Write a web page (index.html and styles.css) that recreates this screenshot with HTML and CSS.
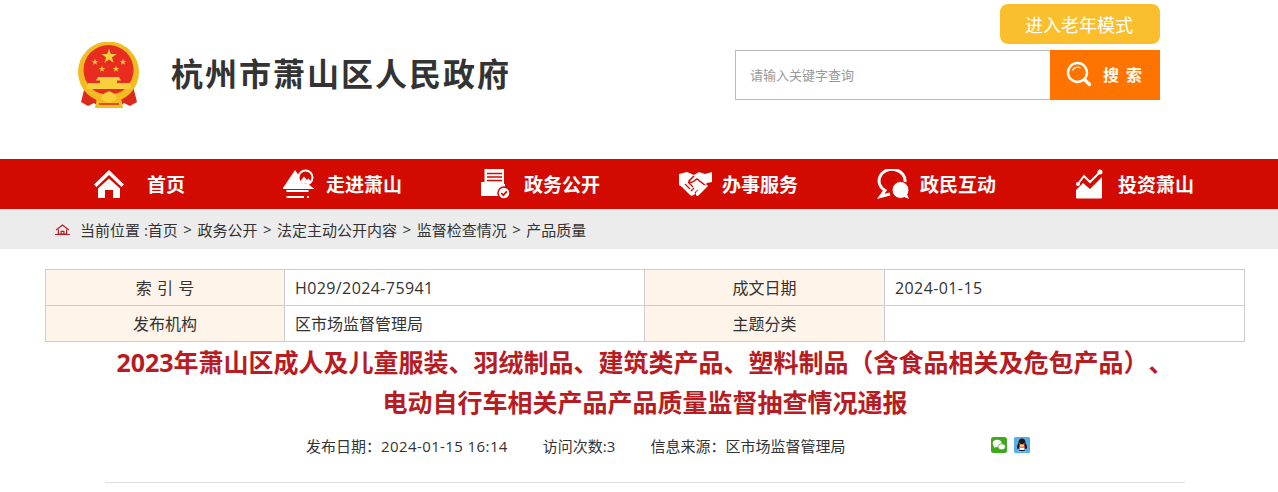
FILE: index.html
```html
<!DOCTYPE html>
<html lang="zh-CN">
<head>
  <meta charset="UTF-8">
  <meta name="viewport" content="width=device-width, initial-scale=1.0">
  <title>杭州市萧山区人民政府</title>
  <link rel="stylesheet" href="styles.css">
</head>
<body>
  <header class="top">
    <div class="brand">
      <svg class="emblem" viewBox="0 0 62 68" width="62" height="68">
        <defs>
          <path id="star" d="M0-1L.224-.309H.951L.363.118.588.809 0 .382-.588.809-.363.118-.951-.309H-.224Z" fill="#f9cf3c"/>
        </defs>
        <path d="M7 44 L3 60 L10 64 L16 61 L22 66 H40 L46 61 L52 64 L59 60 L55 44 Z" fill="#dd2a1d"/>
        <circle cx="30.500" cy="30" r="30.500" fill="#f3bb22"/>
        <circle cx="30.500" cy="28" r="25" fill="#e82c1f"/>
        <use href="#star" transform="translate(31 14.500) scale(8)"/>
        <use href="#star" transform="translate(17 20) scale(3.400)"/>
        <use href="#star" transform="translate(45 20) scale(3.400)"/>
        <use href="#star" transform="translate(24 27) scale(3.400)"/>
        <use href="#star" transform="translate(38 27) scale(3.400)"/>
        <path d="M20 35H41L43 38.500H39V41H52L54 47H8L10 41H22V38.500H18Z" fill="#f9cf3c"/>
        <path d="M6 45 Q30 60 55 45 L52 51 Q30 64 9 51 Z" fill="#f3bb22"/>
        <path d="M19 56 H43 L45 66 H17 Z" fill="#f3bb22"/>
        <path d="M25 52l6-3 6 3 2 5-8 4-8-4z" fill="#f9cf3c"/>
        <path d="M21 62h20" stroke="#dd2a1d" stroke-width="1.500"/>
      </svg>
      <div class="site-name">杭州市萧山区人民政府</div>
    </div>
    <div class="tools">
      <a class="elder" href="#">进入老年模式</a>
      <form class="search">
        <input class="search-input" type="text" placeholder="请输入关键字查询">
        <button class="search-btn" type="button">
          <svg viewBox="0 0 26 26" width="26" height="26" fill="none" stroke="#fff">
            <circle cx="11.500" cy="11.500" r="9.500" stroke-width="2.400"/>
            <path d="M6.500 9.500a5.500 5.500 0 0 1 8-2.500" stroke-width="1.400"/>
            <path d="M18.500 18.500l5 5" stroke-width="3.400" stroke-linecap="round"/>
          </svg>
          <span>搜 索</span>
        </button>
      </form>
    </div>
  </header>

  <nav class="nav">
    <a class="nav-home" href="#">
      <span class="nav-icon">
        <svg viewBox="0 0 30 30" width="30" height="30" fill="#fff">
          <path d="M15 1 L30 15.500 L27.500 18 L15 6 L2.500 18 L0 15.500Z"/>
          <path d="M15 9.500 L26 19.500 V29 H19 V21 H11 V29 H4 V19.500Z"/>
        </svg>
      </span>
      首页
    </a>
    <a href="#">
      <span class="nav-icon">
        <svg viewBox="0 0 32 30" width="32" height="30" fill="#fff">
          <path d="M0 19 L4 13 L12 1 L17 8 L30 19 Z"/>
          <circle cx="22.500" cy="8.500" r="7" fill="#d20a00" stroke="#fff" stroke-width="2"/>
          <path d="M17.500 12 L21 7.500 L24 11 L25.500 9.500 L28 12 L25 14.500 H20Z"/>
          <path d="M0 19H31V20H0Z"/>
          <path d="M3.500 21h22v2h-22zM3.500 27h17.500v2h-17.500zM24 27h2v2h-2z"/>
        </svg>
      </span>
      走进萧山
    </a>
    <a href="#">
      <span class="nav-icon">
        <svg viewBox="0 0 30 30" width="30" height="30">
          <path d="M3.500 0 H23 V15 H24 V27 Q24 27 23 27 H1 Q0 27 0 26 V13 H3.500 Z" fill="#fff"/>
          <path d="M6 4.500h15M6 8h15M6 11.500h15" stroke="#d20a00" stroke-width="1.500"/>
          <circle cx="23" cy="24" r="6" fill="#fff" stroke="#d20a00" stroke-width="1.500"/>
          <path d="M20.300 24l2 2.200 3.500-3.800" fill="none" stroke="#d20a00" stroke-width="1.700"/>
        </svg>
      </span>
      政务公开
    </a>
    <a href="#">
      <span class="nav-icon">
        <svg viewBox="0 0 34 28" width="34" height="28" fill="#fff">
          <path d="M0 4 L8 2 L15 5 L20 2 L26 4 L33 2 V12 L28 13 L16 24 Q13 27 11 25 L3 17 L0 15 Z"/>
          <path d="M15 6 L10 11 Q11 14 15 11 L18 9 L27 16" fill="none" stroke="#d20a00" stroke-width="1.500"/>
          <path d="M6 14l5 5M9 12l5 5M12 21l3-3M16 23l3-3" stroke="#d20a00" stroke-width="1.200"/>
          <path d="M17 22 L27 14 L29 16 L20 25 Q18 27 17 25Z"/>
        </svg>
      </span>
      办事服务
    </a>
    <a href="#">
      <span class="nav-icon">
        <svg viewBox="0 0 33 30" width="33" height="30" fill="none">
          <path d="M28 13 A13 11.500 0 1 0 8 21.500 L3.500 27.500 L13 25" stroke="#fff" stroke-width="3"/>
          <circle cx="23.500" cy="21" r="8.500" fill="#fff" stroke="#d20a00" stroke-width="1"/>
          <path d="M26 27.500l6 2.500-2-5z" fill="#fff"/>
        </svg>
      </span>
      政民互动
    </a>
    <a href="#">
      <span class="nav-icon">
        <svg viewBox="0 0 28 30" width="28" height="30" fill="#fff">
          <path d="M1 28.500 V21 L8 14 L15 20 L27 8 V28.500 Q27 29.500 26 29.500 H2 Q1 29.500 1 28.500Z"/>
          <path d="M3 15 L9 7 L15 13 L25 3" fill="none" stroke="#fff" stroke-width="2"/>
          <circle cx="3" cy="15" r="2"/><circle cx="25" cy="3" r="2.500"/>
        </svg>
      </span>
      投资萧山
    </a>
  </nav>

  <div class="crumbs">
    <svg viewBox="0 0 16 12" width="15" height="11" fill="none" stroke="#b81c22" stroke-width="1.300">
      <path d="M1 6.500L8 1l7 5.500"/>
      <path d="M3.500 6v5h9V6M6.500 11V8h3v3"/>
      <path d="M0 11.500h16"/>
    </svg>
    <span class="crumbs-label">当前位置 :</span><a href="#">首页</a><i>&gt;</i><a href="#">政务公开</a><i>&gt;</i><a href="#">法定主动公开内容</a><i>&gt;</i><a href="#">监督检查情况</a><i>&gt;</i><a href="#">产品质量</a>
  </div>

  <main class="article">
    <table class="meta-table">
      <colgroup>
        <col class="c1"><col class="c2"><col class="c3"><col class="c4">
      </colgroup>
      <tr>
        <th>索 引 号</th><td class="num">H029/2024-75941</td>
        <th>成文日期</th><td class="num">2024-01-15</td>
      </tr>
      <tr>
        <th>发布机构</th><td>区市场监督管理局</td>
        <th>主题分类</th><td></td>
      </tr>
    </table>

    <h1>2023年萧山区成人及儿童服装、羽绒制品、建筑类产品、塑料制品（含食品相关及危包产品）、<br>电动自行车相关产品产品质量监督抽查情况通报</h1>

    <div class="info">
      <span>发布日期<b class="colon">：</b><span class="num">2024-01-15 16:14</span></span>
      <span class="info-gap">访问次数:3</span>
      <span class="info-gap">信息来源<b class="colon">：</b>区市场监督管理局</span>
      <span class="share">
        <svg viewBox="0 0 16 16" width="16" height="16">
          <rect width="16" height="16" rx="2.500" fill="#3fa81e"/>
          <ellipse cx="6.200" cy="6.500" rx="4.500" ry="3.700" fill="#fff"/>
          <path d="M3.500 9l-.6 2 2.200-1.200z" fill="#fff"/>
          <ellipse cx="10.700" cy="9.800" rx="3.700" ry="3" fill="#fff" stroke="#3fa81e" stroke-width=".7"/>
        </svg>
        <svg viewBox="0 0 16 16" width="16" height="16">
          <rect width="16" height="16" rx="1.500" fill="#5aaee8"/>
          <path d="M8 1.500C5.500 1.500 4.500 3.500 4.500 6 3 8.500 2.500 11 3.500 12L5 11.500 5.500 14H10.500L11 11.500 12.500 12C13.500 11 13 8.500 11.500 6 11.500 3.500 10.500 1.500 8 1.500Z" fill="#17181c"/>
          <path d="M5.500 8.500Q8 7 10.500 8.500V13H5.500Z" fill="#fff"/>
          <path d="M5.500 6.800Q8 8.500 10.500 6.800L8 8.500Z" fill="#f5a623" stroke="#f5a623" stroke-width=".8"/>
          <path d="M5 9q3 1.500 6 0v1q-3 1.500-6 0z" fill="#d8251c"/>
          <path d="M4 14h3.500v1H4zM8.500 14H12v1H8.500z" fill="#f5a623"/>
        </svg>
      </span>
    </div>
    <hr class="rule">
  </main>
</body>
</html>
```

FILE: styles.css
```css
/* 全局 */
* { box-sizing: border-box; }

body {
  margin: 0;
  background: #fff;
  color: #333;
  font-family: "Open Sans", "Noto Sans CJK SC", sans-serif;
  font-size: 15px;
  text-spacing-trim: space-all;
}

a { color: inherit; text-decoration: none; }

/* 顶部 */
.top {
  height: 159px;
  padding: 4px 118px 0 78px;
  display: flex;
  justify-content: space-between;
}

.brand {
  display: flex;
  align-items: flex-start;
  padding-top: 38px;
}

.emblem { display: block; }

.site-name {
  margin: 9px 0 0 31px;
  font-size: 32px;
  line-height: 46px;
  font-weight: 700;
  letter-spacing: 2px;
  color: #333;
}

.tools {
  width: 425px;
  display: flex;
  flex-direction: column;
  align-items: flex-end;
  gap: 6px;
}

.elder {
  width: 160px;
  height: 40px;
  padding-right: 2px;
  line-height: 43px;
  text-align: center;
  background: #fbbf2d;
  border-radius: 8px;
  color: #fff;
  font-size: 18px;
}

.search {
  width: 425px;
  height: 50px;
  display: flex;
}

.search-input {
  flex: 1;
  min-width: 0;
  height: 50px;
  padding: 0 15px 0 14px;
  border: 1px solid #bbb;
  border-right: none;
  outline: none;
  font-family: inherit;
  font-size: 13px;
}

.search-input::placeholder { color: #999; opacity: 1; }

.search-btn {
  width: 110px;
  height: 50px;
  padding: 0 2px 3px 0;
  border: none;
  background: #ff7300;
  color: #fff;
  font-family: inherit;
  font-size: 16px;
  font-weight: 700;
  word-spacing: 3px;
  display: flex;
  align-items: center;
  justify-content: center;
  gap: 11px;
}

/* 导航 */
.nav {
  height: 50px;
  padding-left: 94px;
  background: #d20a00;
  display: flex;
}

.nav a {
  width: 198px;
  padding-bottom: 1px;
  display: flex;
  align-items: center;
  color: #fff;
  font-size: 19px;
  font-weight: 700;
}

.nav a.nav-home { width: 189px; }

.nav-icon {
  width: 43px;
  flex: none;
  display: flex;
}

.nav-home .nav-icon { width: 53px; }

/* 面包屑 */
.crumbs {
  height: 40px;
  padding-left: 55px;
  background: #ececec;
  display: flex;
  align-items: center;
  color: #333;
}

.crumbs svg { margin-right: 10px; }
.crumbs i { margin: 0 5.5px; font-style: normal; }

/* 正文 */
.article { padding: 20px 33px 0 45px; }

.meta-table {
  width: 1200px;
  height: 73px;
  border-collapse: collapse;
  table-layout: fixed;
  font-size: 16px;
}

.c1 { width: 239px; }
.c2 { width: 360px; }
.c3 { width: 240px; }
.c4 { width: 360px; }

.meta-table th,
.meta-table td {
  height: 36px;
  padding: 0 10px 1px;
  border: 1px solid #ccc;
  font-weight: 400;
  color: #333;
}

.meta-table th {
  background: #fef4e9;
  text-align: center;
  word-spacing: 1px;
}

.meta-table td { text-align: left; }
.meta-table td.num { padding-bottom: 0; }

.num { letter-spacing: .4px; }

.article h1 {
  width: 1200px;
  margin: 0;
  text-align: center;
  color: #b81c22;
  font-size: 25px;
  line-height: 40px;
  font-weight: 700;
}

.info {
  width: 1200px;
  height: 24px;
  margin-top: 11px;
  padding-left: 261px;
  display: flex;
  align-items: center;
  color: #333;
}

.colon {
  font-family: "Noto Sans CJK TC", sans-serif;
  font-weight: 400;
}

.info-gap { margin-left: 35px; }

.share {
  margin-left: 146px;
  display: flex;
  gap: 7px;
}

.rule {
  width: 1080px;
  margin: 25px 0 0 60px;
  border: none;
  border-top: 1px solid #ddd;
}
```
